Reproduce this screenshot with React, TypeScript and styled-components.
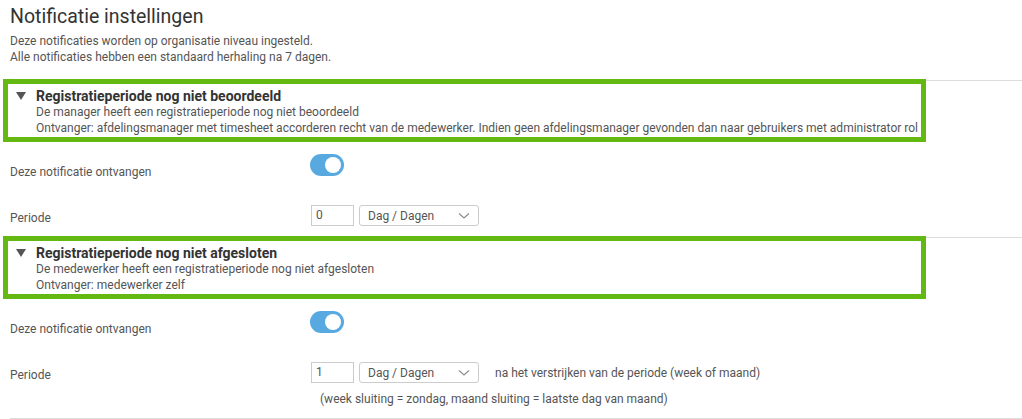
import React from "react";
import styled, { createGlobalStyle } from "styled-components";

const GREEN = "#63b811";
const LINE = "#dcdcdc";
const TEXT = "#555";

type Notification = {
  title: string;
  description: string;
  receiver: string;
  period: string;
  suffix?: string;
  note?: string;
};

const NOTIFICATIONS: Notification[] = [
  {
    title: "Registratieperiode nog niet beoordeeld",
    description: "De manager heeft een registratieperiode nog niet beoordeeld",
    receiver:
      "Ontvanger: afdelingsmanager met timesheet accorderen recht van de medewerker. Indien geen afdelingsmanager gevonden dan naar gebruikers met administrator rol",
    period: "0",
  },
  {
    title: "Registratieperiode nog niet afgesloten",
    description: "De medewerker heeft een registratieperiode nog niet afgesloten",
    receiver: "Ontvanger: medewerker zelf",
    period: "1",
    suffix: "na het verstrijken van de periode (week of maand)",
    note: "(week sluiting = zondag, maand sluiting = laatste dag van maand)",
  },
];

const GlobalStyle = createGlobalStyle`
  body {
    margin: 0;
    background: #fff;
    font-family: Roboto, "Liberation Sans", Arial, sans-serif;
    color: ${TEXT};
  }
`;

const Page = styled.div`
  padding-left: 10px;
  overflow: hidden;
`;

const Title = styled.h1`
  margin: 0;
  padding-top: 5px;
  font-size: 19.5px;
  line-height: 24px;
  font-weight: 400;
  color: #333;
`;

const Intro = styled.p`
  margin: 4px 0 0;
  font-size: 12px;
  line-height: 16px;
  color: ${TEXT};
`;

const Section = styled.section<{ $first?: boolean }>`
  margin-top: ${(p) => (p.$first ? 15 : 11)}px;
  border-top: 1px solid ${LINE};
`;

const Header = styled.div`
  width: 913px;
  margin: -2px 0 0 -7px;
  padding: 4px 0 1px 0;
  border: 5px solid ${GREEN};
  background: #fff;
`;

const HeaderTitle = styled.div`
  display: flex;
  align-items: center;
  font-size: 14px;
  line-height: 16px;
  font-weight: 700;
  color: #333;
`;

const Caret = styled.span`
  width: 0;
  height: 0;
  margin: 0 10px 0 8px;
  border-left: 5px solid transparent;
  border-right: 5px solid transparent;
  border-top: 8px solid #555;
`;

const HeaderText = styled.div`
  padding-left: 28px;
  font-size: 12px;
  line-height: 16px;
  color: ${TEXT};
`;

const Row = styled.div<{ $top: number }>`
  display: grid;
  grid-template-columns: 300px 1fr;
  align-items: start;
  margin-top: ${(p) => p.$top}px;
`;

const Label = styled.div<{ $offset: number }>`
  padding-top: ${(p) => p.$offset}px;
  font-size: 12px;
  line-height: 16px;
  color: ${TEXT};
`;

const Toggle = styled.div`
  position: relative;
  width: 34px;
  height: 22px;
  border-radius: 11px;
  background: #58a9e0;
  &::after {
    content: "";
    position: absolute;
    top: 3px;
    right: 3px;
    width: 16px;
    height: 16px;
    border-radius: 50%;
    background: #fff;
  }
`;

const Controls = styled.div`
  display: flex;
  align-items: center;
  gap: 5px;
`;

const NumberInput = styled.div`
  box-sizing: border-box;
  width: 43px;
  height: 21px;
  margin-left: 1px;
  padding: 0 4px;
  border: 1px solid #ccc;
  font-size: 12px;
  line-height: 19px;
  color: ${TEXT};
`;

const Select = styled.div`
  box-sizing: border-box;
  display: flex;
  align-items: center;
  justify-content: space-between;
  width: 120px;
  height: 21px;
  padding: 0 8px;
  border: 1px solid #ccc;
  border-radius: 3px;
  font-size: 12px;
  color: ${TEXT};
`;

const Suffix = styled.span`
  margin-left: 11px;
  font-size: 12px;
  color: ${TEXT};
`;

const Note = styled.div`
  padding: 8px 0 0 10px;
  font-size: 12px;
  line-height: 16px;
  color: ${TEXT};
`;

const BottomLine = styled.div`
  margin-top: 11px;
  border-top: 1px solid ${LINE};
`;

const Chevron = () => (
  <svg width="12" height="8" viewBox="0 0 12 8" fill="none">
    <polyline points="1,1.5 6,6 11,1.5" stroke="#8a8a8a" strokeWidth="1.1" />
  </svg>
);

const NotificationBlock = ({ n, first }: { n: Notification; first: boolean }) => (
  <Section $first={first}>
    <Header>
      <HeaderTitle>
        <Caret />
        {n.title}
      </HeaderTitle>
      <HeaderText>{n.description}</HeaderText>
      <HeaderText>{n.receiver}</HeaderText>
    </Header>
    <Row $top={12}>
      <Label $offset={10}>Deze notificatie ontvangen</Label>
      <Toggle />
    </Row>
    <Row $top={25}>
      <Label $offset={5}>Periode</Label>
      <div>
        <Controls>
          <NumberInput>{n.period}</NumberInput>
          <Select>
            Dag / Dagen
            <Chevron />
          </Select>
          {n.suffix && <Suffix>{n.suffix}</Suffix>}
        </Controls>
        {n.note && <Note>{n.note}</Note>}
      </div>
    </Row>
  </Section>
);

export default function App() {
  return (
    <Page>
      <GlobalStyle />
      <Title>Notificatie instellingen</Title>
      <Intro>
        Deze notificaties worden op organisatie niveau ingesteld.
        <br />
        Alle notificaties hebben een standaard herhaling na 7 dagen.
      </Intro>
      {NOTIFICATIONS.map((n, i) => (
        <NotificationBlock key={n.title} n={n} first={i === 0} />
      ))}
      <BottomLine />
    </Page>
  );
}
